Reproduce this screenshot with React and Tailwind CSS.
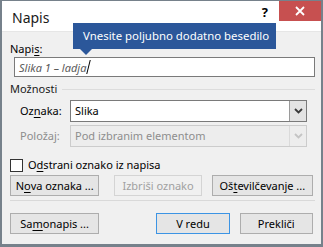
import React from "react";

function Chevron({ color }) {
  return (
    <svg width="9" height="6" viewBox="0 0 9 6" className="block">
      <path d="M1 1 L4.5 4.5 L8 1" fill="none" stroke={color} strokeWidth="1.8" />
    </svg>
  );
}

function Btn({ children, className = "", disabled = false, def = false }) {
  return (
    <div
      className={
        "h-[21px] flex items-center justify-center text-[11px] leading-none whitespace-nowrap " +
        (disabled
          ? "bg-[#f0f0f0] border border-[#d4d4d4] text-[#a0a0a0] "
          : def
          ? "bg-[#e5e5e5] border border-[#3c94e4] text-black "
          : "bg-[#e5e5e5] border border-[#adadad] text-black ") +
        className
      }
    >
      {children}
    </div>
  );
}

export default function App() {
  return (
    <div className="relative w-[323px] h-[247px] bg-[#f0f0f0] border-t border-x-2 border-b-[3px] border-[#76818b] flex flex-col font-['Noto_Sans',sans-serif] text-black overflow-hidden">
      {/* title bar */}
      <div className="h-[31px] bg-white border-b border-[#e6e6e6] flex items-start shrink-0">
        <div className="pl-[10px] pt-[7px] text-[14px] leading-[20px] text-[#1a1a1a]">Napis</div>
        <div className="ml-auto flex items-start">
          <div className="pt-[2px] pr-[11px] text-[13px] leading-[18px] font-bold">?</div>
          <div className="w-[42px] h-[20px] bg-[#c75050] flex items-center justify-center">
            <svg width="10" height="10" viewBox="0 0 10 10">
              <path d="M1 1 L9 9 M9 1 L1 9" stroke="white" strokeWidth="1.8" />
            </svg>
          </div>
        </div>
      </div>

      {/* body */}
      <div className="flex flex-col px-[8px] text-[11px] whitespace-nowrap">
        <div className="mt-[9px] h-[16px] leading-[16px]">
          Napi<span className="underline underline-offset-2">s</span>:
        </div>
        <div className="ml-[4px] w-[301px] h-[20px] bg-white border border-[#7a7a7a] flex items-center pl-[4px]">
          <span className="italic text-[#5a5a5a] leading-none">Slika 1 – ladja</span>
          <span className="ml-[2px] w-px h-[14px] bg-black skew-x-[-14deg]"></span>
        </div>

        <div className="mt-[4px] h-[16px] flex items-center">
          <span className="leading-[16px] text-[#1a1a1a]">Možnosti</span>
          <div className="ml-[5px] flex-1 mr-[-2px] h-px bg-[#dcdcdc]"></div>
        </div>

        <div className="mt-[3px] h-[22px] flex items-center">
          <div className="w-[60px] pl-[10px]">
            Oz<span className="underline underline-offset-2">n</span>aka:
          </div>
          <div className="w-[237px] h-[22px] bg-white border border-[#7a7a7a] flex items-center">
            <span className="pl-[4px] flex-1">Slika</span>
            <div className="w-[17px] h-full bg-[#e3e3e3] border-l border-[#9a9a9a] flex items-center justify-center">
              <Chevron color="#3a3a3a" />
            </div>
          </div>
        </div>

        <div className="mt-[3px] h-[22px] flex items-center text-[#8d8d8d]">
          <div className="w-[60px] pl-[10px]">Položaj:</div>
          <div className="w-[237px] h-[22px] bg-[#ededed] border border-[#cccccc] flex items-center">
            <span className="pl-[4px] flex-1">Pod izbranim elementom</span>
            <div className="w-[17px] h-full border-l border-[#dadada] flex items-center justify-center">
              <Chevron color="#c4c4c4" />
            </div>
          </div>
        </div>

        <div className="mt-[10px] h-[16px] flex items-center">
          <div className="w-[13px] h-[13px] bg-white border border-[#333333]"></div>
          <span className="ml-[5px] leading-[16px]">
            O<span className="underline underline-offset-2">d</span>strani oznako iz napisa
          </span>
        </div>

        <div className="mt-[2px] flex">
          <Btn className="w-[90px]">
            N<span className="underline underline-offset-2">o</span>va oznaka ...
          </Btn>
          <Btn className="w-[88px] ml-[15px]" disabled>
            Izbriši oznako
          </Btn>
          <Btn className="w-[102px] ml-[10px]">
            Oš<span className="underline underline-offset-2">t</span>evilčevanje ...
          </Btn>
        </div>

        <div className="mt-[4px] w-[305px] h-px bg-[#d9d9d9]"></div>

        <div className="mt-[12px] flex">
          <Btn className="w-[90px]">
            Sa<span className="underline underline-offset-2">m</span>onapis ...
          </Btn>
          <Btn className="w-[74px] ml-[57px]" def>
            V redu
          </Btn>
          <Btn className="w-[74px] ml-[10px]">Prekliči</Btn>
        </div>
      </div>

      {/* tooltip */}
      <div className="absolute left-[71px] top-[22px] w-[203px] h-[26px] bg-[#2b579a] text-white text-[11.4px] leading-[26px] pl-[10px] whitespace-nowrap">
        Vnesite poljubno dodatno besedilo
      </div>
      <svg className="absolute left-[77px] top-[47px]" width="14" height="7" viewBox="0 0 14 7">
        <path d="M0 0 L14 0 L7 7 Z" fill="#2b579a" />
      </svg>
    </div>
  );
}
